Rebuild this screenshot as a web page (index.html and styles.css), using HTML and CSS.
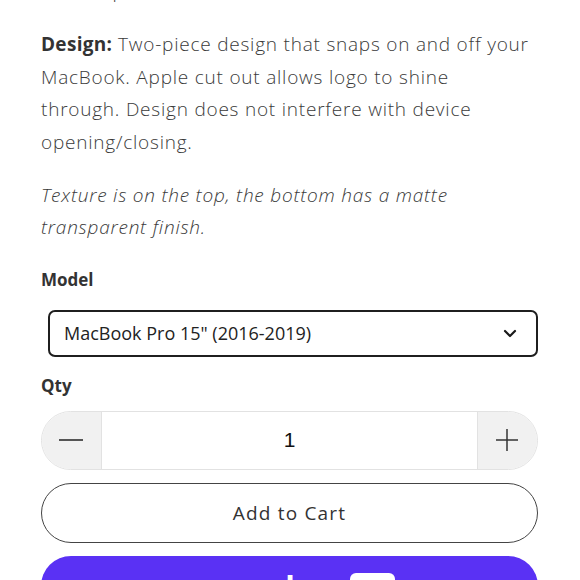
FILE: index.html
```html
<!DOCTYPE html>
<html lang="en">
<head>
  <meta charset="UTF-8">
  <title>MacBook Case</title>
  <link rel="stylesheet" href="styles.css">
</head>
<body>

  <div class="product">
    <div class="description">
      <p class="lead">Fit: precise</p>
      <p><strong>Design:</strong> Two-piece design that snaps on and off your MacBook. Apple cut out allows logo to shine through. Design does not interfere with device opening/closing.</p>
      <p><em>Texture is on the top, the bottom has a matte transparent finish.</em></p>
    </div>

    <label class="field-label">Model</label>
    <div class="select">
      <span>MacBook Pro 15" (2016-2019)</span>
      <svg width="14" height="10" viewBox="0 0 14 10">
        <path d="M2 3 L7 8 L12 3" fill="none" stroke="#1a1a1a" stroke-width="2.2" stroke-linecap="round" stroke-linejoin="round"/>
      </svg>
    </div>

    <label class="field-label qty-label">Qty</label>
    <div class="qty">
      <button class="qty-btn minus">
        <svg width="26" height="4" viewBox="0 0 26 4"><line x1="1" y1="2" x2="25" y2="2" stroke="#555" stroke-width="2"/></svg>
      </button>
      <div class="qty-value">1</div>
      <button class="qty-btn plus">
        <svg width="24" height="24" viewBox="0 0 24 24">
          <line x1="1" y1="12" x2="23" y2="12" stroke="#333" stroke-width="1.5"/>
          <line x1="12" y1="1" x2="12" y2="23" stroke="#333" stroke-width="1.5"/>
        </svg>
      </button>
    </div>

    <button class="add-cart">Add to Cart</button>

    <button class="shop-pay">
      <span class="buy-with">Buy with</span>
      <span class="shop-logo">shop</span>
      <span class="pay-badge">Pay</span>
    </button>
  </div>

</body>
</html>
```

FILE: styles.css
```css
body {
  margin: 0;
  background: #fff;
  color: #3a3a3a;
  font-family: 'Open Sans', 'Lato', sans-serif;
  overflow: hidden;
}

.product {
  padding: 0 42px 0 41px;
}

.description {
  margin-top: -25px;
}

.description p {
  max-width: 489px;
  font-size: 19px;
  line-height: 32.4px;
  margin: 0 0 21px;
  font-weight: 300;
  letter-spacing: 0.78px;
}

.description .lead {
  padding-left: 38px;
}

.description strong {
  font-weight: 700;
  letter-spacing: 0.3px;
  color: #333;
}

.field-label {
  display: block;
  font-size: 17px;
  font-weight: 700;
  line-height: 24px;
  margin-top: 24px;
  color: #333;
}

.select {
  margin: 18px 0 0 7px;
  height: 43px;
  border: 2px solid #1f1f1f;
  border-radius: 7px;
  display: flex;
  align-items: center;
  justify-content: space-between;
  padding: 0 19px 0 14px;
  font-size: 18px;
  font-weight: 400;
  color: #222;
}

.qty-label {
  margin-top: 17px;
}

.qty {
  margin-top: 13px;
  height: 57px;
  border: 1px solid #e2e2e2;
  border-radius: 30px;
  overflow: hidden;
  display: flex;
}

.qty-btn {
  width: 60px;
  border: none;
  background: #f1f1f1;
  display: flex;
  align-items: center;
  padding: 0;
}

.qty-btn.minus {
  border-right: 1px solid #e2e2e2;
  justify-content: flex-start;
  padding-left: 16px;
}

.qty-btn.plus {
  border-left: 1px solid #e2e2e2;
  justify-content: flex-start;
  padding-left: 17px;
}

.qty-value {
  flex: 1;
  display: flex;
  align-items: center;
  justify-content: center;
  font-family: 'Liberation Sans', Arial, sans-serif;
  font-size: 21px;
  color: #111;
}

.add-cart {
  display: block;
  width: 100%;
  margin-top: 13px;
  height: 60px;
  border: 1.5px solid #444;
  border-radius: 30px;
  background: #fff;
  font-family: 'Open Sans', sans-serif;
  font-weight: 400;
  font-size: 19px;
  letter-spacing: 1.2px;
  color: #333;
}

.shop-pay {
  display: flex;
  align-items: center;
  justify-content: center;
  gap: 6px;
  width: 100%;
  margin-top: 13px;
  height: 62px;
  border: none;
  border-radius: 30px;
  background: #5a31f4;
  color: #fff;
  padding-top: 4px;
}

.buy-with {
  font-family: 'Open Sans', sans-serif;
  font-size: 20px;
}

.shop-logo {
  font-family: 'Lato', sans-serif;
  font-weight: 900;
  font-size: 34px;
  line-height: 34px;
}

.pay-badge {
  background: #fff;
  color: #5a31f4;
  border-radius: 6px;
  font-family: 'Lato', sans-serif;
  font-weight: 700;
  font-size: 20px;
  padding: 4px 6px;
  line-height: 22px;
}
```
